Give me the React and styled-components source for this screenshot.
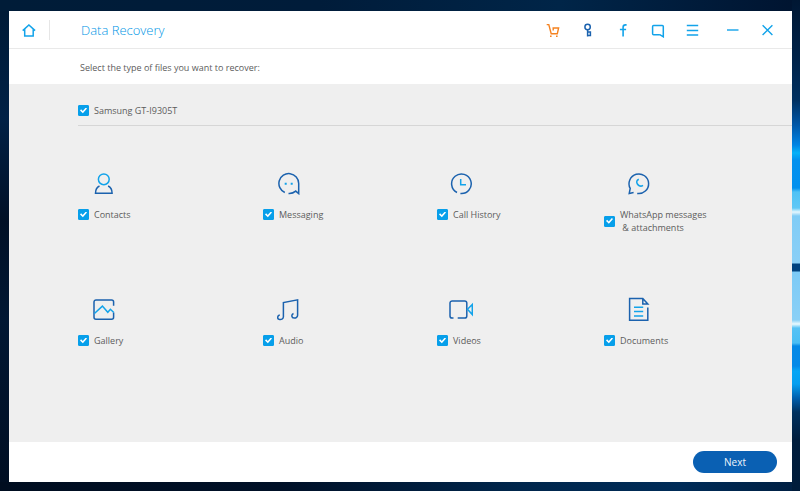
import React from "react";
import styled, { createGlobalStyle } from "styled-components";

const SKY = "#12a3ea";
const NAVY = "#1b62ae";

const GlobalStyle = createGlobalStyle`
  *, *::before, *::after { box-sizing: border-box; }
  body {
    margin: 0;
    font-family: "Open Sans", "Noto Sans", sans-serif;
    color: #5c5c5c;
  }
`;

const Desktop = styled.div`
  min-height: 100vh;
  display: flex;
  padding: 11px 8px 9px 9px;
  background:
    linear-gradient(180deg,
      #001733 0, #00234a 60px, #003060 100px, #0057a8 125px, #0084e4 145px,
      #06b2f8 153px, #0391ee 160px, #0290ee 188px, #4fc2f5 192px, #5fc8f6 208px,
      #e6f7fe 212px, #80ccf6 216px, #8acff6 263px, #00427f 264px, #00427f 271px,
      #7ccaf6 272px, #8ad0f6 320px, #eafaff 324px, #56c2f5 328px, #49bef4 343px,
      #0489e6 346px, #0389e8 366px, #06a6f5 371px, #049ff0 384px, #005fae 398px,
      #00315f 412px, #001d3d 440px, #001c3b 100%) right / 8px 100% no-repeat,
    linear-gradient(90deg, #000d20 0, #001027 35%, #00264c 65%, #002c58 85%, #001f42 100%)
      bottom / 100% 9px no-repeat,
    linear-gradient(90deg, #001c38 0, #001c3a 40%, #002548 70%, #001430 100%)
      top / 100% 11px no-repeat,
    linear-gradient(180deg, #001a35 0, #002146 24%, #001026 45%, #001733 65%, #000e22 100%);
`;

const Window = styled.div`
  flex: 1;
  display: flex;
  flex-direction: column;
  background: #fff;
`;

const TitleBar = styled.header`
  display: flex;
  align-items: center;
  height: 38px;
  padding-right: 7px;
  border-bottom: 1px solid #e9e9e9;
`;

const ToolButton = styled.button`
  display: grid;
  place-items: center;
  width: ${({ $wide }) => ($wide ? 40 : 35)}px;
  height: 37px;
  padding: 0;
  border: 0;
  background: none;
  color: ${({ $color }) => $color || SKY};
  cursor: pointer;
`;

const Divider = styled.span`
  width: 1px;
  height: 20px;
  background: #e6e6e6;
`;

const Title = styled.h1`
  flex: 1;
  margin: 0 0 0 31px;
  font-size: 13px;
  font-weight: 300;
  line-height: 18px;
  color: #0096e6;
`;

const Tools = styled.nav`
  display: flex;
  margin-right: 5px;
`;

const Prompt = styled.p`
  margin: 0;
  padding: 11px 71px 8px;
  font-size: 9px;
  line-height: 16px;
`;

const Content = styled.main`
  flex: 1;
  padding: 20px 0 18px 69px;
  background: #efefef;
`;

const DeviceRow = styled.div`
  display: flex;
  padding-bottom: 8px;
  border-bottom: 1px solid #d6d6d6;
`;

const CheckLabel = styled.label`
  display: inline-flex;
  align-items: center;
  gap: 5px;
  font-size: 9px;
  line-height: 13px;
  white-space: pre;
  vertical-align: top;
  cursor: pointer;
`;

const Tick = styled.input`
  appearance: none;
  display: grid;
  place-items: center;
  width: 11px;
  height: 11px;
  margin: 0;
  border-radius: 1px;
  border: 1px solid #079fea;
  background: #fff;

  &:checked { background: #079fea; }
  &:checked::before {
    content: "";
    width: 7px;
    height: 6px;
    background: #fff;
    clip-path: polygon(0 48%, 16% 30%, 39% 58%, 84% 0, 100% 18%, 41% 96%);
  }
`;

const TypeGrid = styled.div`
  display: grid;
  grid-template-columns: 185fr 174fr 167fr 188fr;
  row-gap: 63px;
  padding-top: 45px;
`;

const TypeItem = styled.section`
  svg {
    display: block;
    margin: 0 0 13px ${({ $indent }) => $indent}px;
  }
`;

const Footer = styled.footer`
  display: flex;
  justify-content: flex-end;
  padding: 9px 15px;
`;

const NextButton = styled.button`
  width: 84px;
  height: 22px;
  padding: 0;
  border: 0;
  border-radius: 11px;
  background: #0a60b3;
  color: #eef5fc;
  font: 400 10px/20px "Open Sans", "Noto Sans", sans-serif;
  cursor: pointer;
`;

const SmallIcon = ({ children }) => (
  <svg width="16" height="16" viewBox="0 0 16 16" fill="none" stroke="currentColor" strokeWidth="1.4" aria-hidden="true">
    {children}
  </svg>
);

const LargeIcon = ({ children }) => (
  <svg width="24" height="24" viewBox="0 0 24 24" fill="none" stroke={NAVY} strokeWidth="1.5" aria-hidden="true">
    {children}
  </svg>
);

const HomeIcon = () => (
  <SmallIcon>
    <path d="M1.7 8.6 7.9 3l6.2 5.6M3.7 7.2v6.9h8.5V7.2" strokeWidth="1.5" />
  </SmallIcon>
);

const tools = [
  {
    name: "Buy", color: "#f58220",
    art: <><path d="M1.7 2.6h2.1l2.4 9.2h6.1L13.6 6H8.2v2.6" /><path d="M5 14.2h1.6M11 14.2h1.6" /></>,
  },
  {
    name: "Register", color: NAVY,
    art: <><circle cx="7.6" cy="5" r="2.7" strokeWidth="1.5" /><path d="M7.6 7.6v7M7.6 10h2.8v3.4H7.6" strokeWidth="1.5" /></>,
  },
  {
    name: "Facebook",
    art: <path d="M11.6 2.9h-1.2C8.8 2.9 8.1 3.7 8.1 5.2v9.3M4.9 7.5h6.2" strokeWidth="1.6" />,
  },
  {
    name: "Feedback",
    art: <path d="M9.8 12.7H3.6a1 1 0 0 1-1-1V4.5a1 1 0 0 1 1-1h8.7a1 1 0 0 1 1 1v10.3l-3.5-2.1" strokeWidth="1.5" />,
  },
  { name: "Menu", art: <path d="M1.8 3.5h11.4M1.8 8.5h11.4M1.8 13h11.4" /> },
];

const types = [
  {
    name: "Contacts", indent: 14,
    art: (
      <>
        <circle cx="11.8" cy="8.3" r="5.4" stroke={SKY} />
        <path d="M7.5 15C4.8 16.2 3.5 18.8 3.5 22.3h16.6c0-3.5-1.3-6.1-4-7.3" />
      </>
    ),
  },
  {
    name: "Messaging", indent: 14,
    art: (
      <>
        <path d="M7.8 21.5A9.9 9.9 0 1 1 21.7 12.4v10.2l-3-2.5a9.9 9.9 0 0 1-7.2 2.3" />
        <path d="M7.7 12.7h2M13.7 12.7h2" stroke={SKY} strokeWidth="2" />
      </>
    ),
  },
  {
    name: "Call History", indent: 12,
    art: (
      <>
        <path d="M8 21.5a9.8 9.8 0 1 1 3.4 1" />
        <path d="M11.7 8v5.7H17" stroke={SKY} />
      </>
    ),
  },
  {
    name: "WhatsApp messages\n & attachments", indent: 23,
    art: (
      <>
        <path d="M10.2 22.4a9.8 9.8 0 1 0-7-5l-1 5.1 4.4-.9" />
        <path d="M11.8 8.2c-2.2 1-2.6 2.9-1.4 4.8 1.2 2 3.4 2.9 5.6 1.3" stroke={SKY} />
      </>
    ),
  },
  {
    name: "Gallery", indent: 14,
    art: (
      <>
        <path d="M21.6 8.8V4.9a2 2 0 0 0-2-2H4a2 2 0 0 0-2 2v15.4a2 2 0 0 0 2 2h15.6a2 2 0 0 0 2-2v-4.8" />
        <path d="m2.4 16.5 8-7.4 5.4 6.2 2.6-3 3.4 3.2" stroke={SKY} />
      </>
    ),
  },
  {
    name: "Audio", indent: 14,
    art: (
      <>
        <path d="M2.8 18C.2 18.4.1 21.6 2 22.3c2.2.7 4.4-.3 4.4-2.5V5.6l14.2-2.8v15.5c0 1.8-1.6 2.9-3.5 2.8-2.7-.1-3.1-3.5-.6-4.6" />
      </>
    ),
  },
  {
    name: "Videos", indent: 12,
    art: (
      <>
        <path d="M4.5 21.1H3.2a2.2 2.2 0 0 1-2.2-2.2V6.1a2.2 2.2 0 0 1 2.2-2.2h12.4a2.2 2.2 0 0 1 2.2 2.2v12.8a2.2 2.2 0 0 1-2.2 2.2H8.7" />
        <path d="m18.5 12.2 4.8-4.7v10z" stroke={SKY} />
      </>
    ),
  },
  {
    name: "Documents", indent: 23,
    art: (
      <>
        <path d="M20.8 10.4v12.9H2.6V1.6h13.2l5 5.3h-5V1.6" />
        <path d="M7 10.2h9.2M7 14.6h9.2M7 19h9.2" stroke={SKY} />
      </>
    ),
  },
];

const CheckBox = ({ children }) => (
  <CheckLabel>
    <Tick type="checkbox" defaultChecked />
    <span>{children}</span>
  </CheckLabel>
);

export default function App() {
  return (
    <>
      <GlobalStyle />
      <Desktop>
        <Window>
          <TitleBar>
            <ToolButton $wide aria-label="Home"><HomeIcon /></ToolButton>
            <Divider />
            <Title>Data Recovery</Title>
            <Tools>
              {tools.map(({ name, color, art }) => (
                <ToolButton key={name} $color={color} aria-label={name}>
                  <SmallIcon>{art}</SmallIcon>
                </ToolButton>
              ))}
            </Tools>
            <ToolButton aria-label="Minimize">
              <SmallIcon><path d="M2 8h11.5" /></SmallIcon>
            </ToolButton>
            <ToolButton aria-label="Close">
              <SmallIcon><path d="m2.6 3.2 9.8 9.8M12.4 3.2 2.6 13" /></SmallIcon>
            </ToolButton>
          </TitleBar>
          <Prompt>Select the type of files you want to recover:</Prompt>
          <Content>
            <DeviceRow>
              <CheckBox>Samsung GT-I9305T</CheckBox>
            </DeviceRow>
            <TypeGrid>
              {types.map(({ name, indent, art }) => (
                <TypeItem key={name} $indent={indent}>
                  <LargeIcon>{art}</LargeIcon>
                  <CheckBox>{name}</CheckBox>
                </TypeItem>
              ))}
            </TypeGrid>
          </Content>
          <Footer>
            <NextButton>Next</NextButton>
          </Footer>
        </Window>
      </Desktop>
    </>
  );
}
